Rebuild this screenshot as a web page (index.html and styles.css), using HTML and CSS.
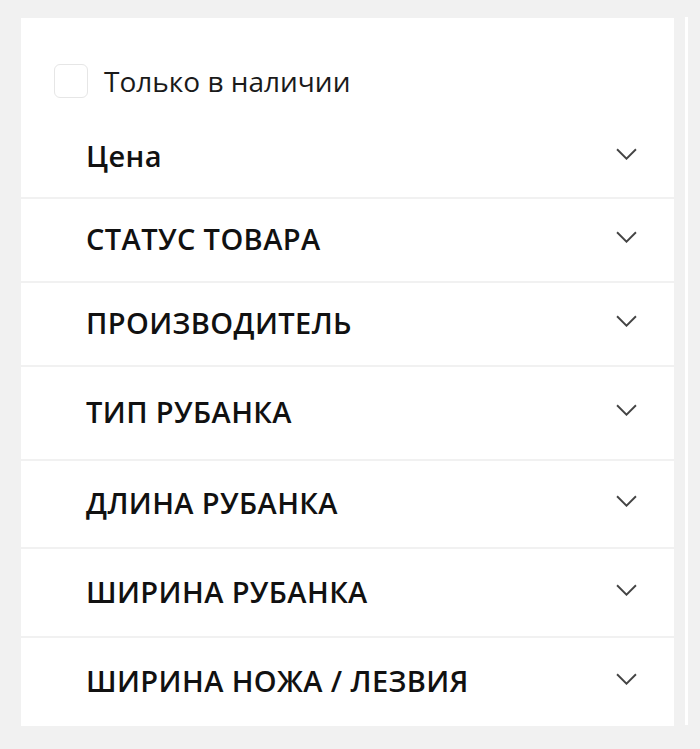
FILE: index.html
```html
<!DOCTYPE html>
<html lang="ru">
<head>
    <meta charset="UTF-8">
    <title>Фильтр</title>
    <link rel="stylesheet" href="styles.css">
</head>
<body>
    <div class="page">
        <aside class="filter">
            <div class="filter-top">
                <label class="stock-check">
                    <span class="checkbox"></span>
                    <span>Только в наличии</span>
                </label>
                <div class="filter-row filter-row--price">
                    <span class="filter-title filter-title--plain">Цена</span>
                    <svg class="chevron" viewBox="0 0 20 11"><path d="M1 1l9 9 9-9"/></svg>
                </div>
            </div>
            <div class="filter-row h82">
                <span class="filter-title">Статус товара</span>
                <svg class="chevron" viewBox="0 0 20 11"><path d="M1 1l9 9 9-9"/></svg>
            </div>
            <div class="filter-row h82">
                <span class="filter-title">Производитель</span>
                <svg class="chevron" viewBox="0 0 20 11"><path d="M1 1l9 9 9-9"/></svg>
            </div>
            <div class="filter-row h92">
                <span class="filter-title">Тип рубанка</span>
                <svg class="chevron" viewBox="0 0 20 11"><path d="M1 1l9 9 9-9"/></svg>
            </div>
            <div class="filter-row h86">
                <span class="filter-title">Длина рубанка</span>
                <svg class="chevron" viewBox="0 0 20 11"><path d="M1 1l9 9 9-9"/></svg>
            </div>
            <div class="filter-row h87">
                <span class="filter-title">Ширина рубанка</span>
                <svg class="chevron" viewBox="0 0 20 11"><path d="M1 1l9 9 9-9"/></svg>
            </div>
            <div class="filter-row h88">
                <span class="filter-title">Ширина ножа / лезвия</span>
                <svg class="chevron" viewBox="0 0 20 11"><path d="M1 1l9 9 9-9"/></svg>
            </div>
        </aside>
        <div class="scroll-track"></div>
    </div>
</body>
</html>
```

FILE: styles.css
```css
body {
    margin: 0;
    background-color: #f1f1f1;
    font-family: "Open Sans", Arial, sans-serif;
    color: #111;
}

.page {
    display: flex;
    align-items: flex-start;
    gap: 11px;
    padding: 17px 0 0 21px;
}

.filter {
    width: 653px;
    margin-top: 1px;
    display: flex;
    flex-direction: column;
    gap: 2px;
}

.filter-top {
    background-color: #fff;
    height: 179px;
    padding-top: 44px;
    box-sizing: border-box;
}

.stock-check {
    display: flex;
    align-items: center;
    gap: 16px;
    padding-left: 33px;
    font-size: 28px;
    color: #1a1a1a;
}

.checkbox {
    width: 34px;
    height: 34px;
    border: 1px solid #e6e6e6;
    border-radius: 6px;
    box-sizing: border-box;
}

.filter-row {
    background-color: #fff;
    display: flex;
    align-items: center;
    justify-content: space-between;
    padding: 0 37px 3px 65px;
    box-sizing: border-box;
}

.filter-row--price {
    background: none;
    height: 56px;
    margin-top: 29px;
}

.filter-title {
    font-size: 29px;
    font-weight: 600;
    letter-spacing: 0.4px;
    text-transform: uppercase;
}

.filter-title--plain {
    text-transform: none;
}

.chevron {
    width: 21px;
    height: 12px;
    margin-top: -3px;
    fill: none;
    stroke: #444;
    stroke-width: 1.8;
}

.h82 { height: 82px; }
.h86 { height: 86px; }
.h87 { height: 87px; }
.h88 { height: 88px; }
.h92 { height: 92px; }

.scroll-track {
    width: 3px;
    height: 708px;
    background-color: #fff;
}
```
